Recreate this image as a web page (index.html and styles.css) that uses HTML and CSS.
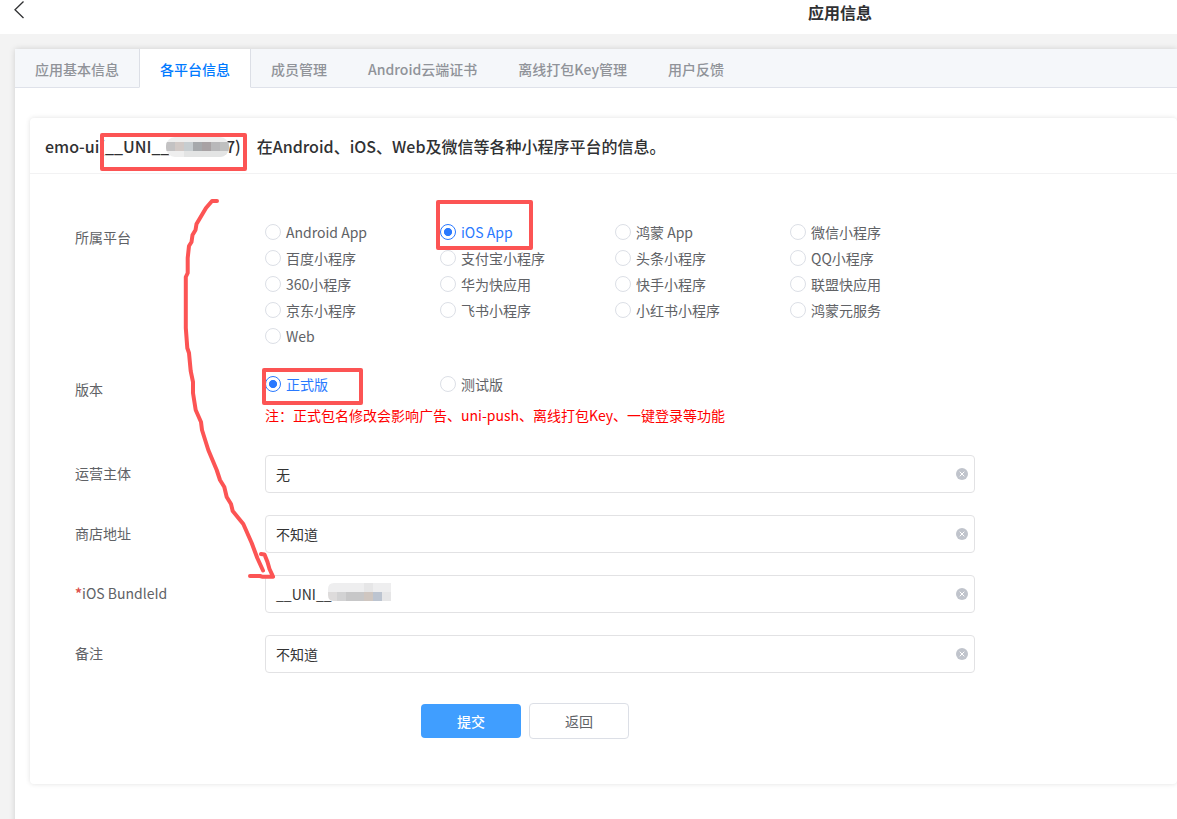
FILE: index.html
```
<!DOCTYPE html>
<html lang="zh-CN">
  <head>
    <meta charset="UTF-8" />
    <meta name="viewport" content="width=device-width, initial-scale=1.0" />
    <title>应用信息</title>
    <link rel="stylesheet" href="styles.css">
  </head>
  <body>
    <div class="header">
      <svg class="back" width="12" height="18" viewBox="0 0 12 18"><path d="M10.5 0.500 L2 8.800 L10.500 17" /></svg>
      <h1>应用信息</h1>
    </div>

    <div class="panel">
      <div class="tabs">
        <div class="tab">应用基本信息</div>
        <div class="tab active">各平台信息</div>
        <div class="tab">成员管理</div>
        <div class="tab">Android云端证书</div>
        <div class="tab">离线打包Key管理</div>
        <div class="tab">用户反馈</div>
      </div>

      <div class="card">
        <div class="card-title">
          <span>emo-ui(__UNI__</span><span class="hidden-id"></span><span>7)</span><span class="desc">在Android、iOS、Web及微信等各种小程序平台的信息。</span>
        </div>

        <form class="form">
          <div class="row platforms">
            <div class="label">所属平台</div>
            <div class="radios">
              <label class="radio"><i></i>Android App</label>
              <label class="radio checked"><i></i>iOS App</label>
              <label class="radio"><i></i>鸿蒙 App</label>
              <label class="radio"><i></i>微信小程序</label>
              <label class="radio"><i></i>百度小程序</label>
              <label class="radio"><i></i>支付宝小程序</label>
              <label class="radio"><i></i>头条小程序</label>
              <label class="radio"><i></i>QQ小程序</label>
              <label class="radio"><i></i>360小程序</label>
              <label class="radio"><i></i>华为快应用</label>
              <label class="radio"><i></i>快手小程序</label>
              <label class="radio"><i></i>联盟快应用</label>
              <label class="radio"><i></i>京东小程序</label>
              <label class="radio"><i></i>飞书小程序</label>
              <label class="radio"><i></i>小红书小程序</label>
              <label class="radio"><i></i>鸿蒙元服务</label>
              <label class="radio"><i></i>Web</label>
            </div>
          </div>

          <div class="row version">
            <div class="label">版本</div>
            <div>
              <div class="radios">
                <label class="radio checked"><i></i>正式版</label>
                <label class="radio"><i></i>测试版</label>
              </div>
              <div class="note">注：正式包名修改会影响广告、uni-push、离线打包Key、一键登录等功能</div>
            </div>
          </div>

          <div class="row field">
            <div class="label">运营主体</div>
            <div class="input"><span>无</span><svg class="clear" viewBox="0 0 12 12"><circle cx="6" cy="6" r="6" /><path d="M3.7 3.7l4.6 4.6M8.3 3.7L3.7 8.3" /></svg></div>
          </div>
          <div class="row field">
            <div class="label">商店地址</div>
            <div class="input"><span>不知道</span><svg class="clear" viewBox="0 0 12 12"><circle cx="6" cy="6" r="6" /><path d="M3.7 3.7l4.6 4.6M8.3 3.7L3.7 8.3" /></svg></div>
          </div>
          <div class="row field">
            <div class="label"><b class="required">*</b>iOS BundleId</div>
            <div class="input"><span>__UNI__</span><svg class="clear" viewBox="0 0 12 12"><circle cx="6" cy="6" r="6" /><path d="M3.7 3.7l4.6 4.6M8.3 3.7L3.7 8.3" /></svg></div>
          </div>
          <div class="row field">
            <div class="label">备注</div>
            <div class="input"><span>不知道</span><svg class="clear" viewBox="0 0 12 12"><circle cx="6" cy="6" r="6" /><path d="M3.7 3.7l4.6 4.6M8.3 3.7L3.7 8.3" /></svg></div>
          </div>

          <div class="actions">
            <button type="button" class="submit">提交</button>
            <button type="button" class="cancel">返回</button>
          </div>
        </form>
      </div>
    </div>

    <!-- red marks and masked ids, drawn over the page -->
    <svg class="marks" width="1177" height="819" viewBox="0 0 1177 819">
      <defs>
        <clipPath id="mask1"><rect x="166" y="137" width="63" height="20" rx="9" /></clipPath>
        <clipPath id="mask2"><path d="M334 583h57v18h-57q-6 0-6-6v-6q0-6 6-6z" /></clipPath>
      </defs>
      <g clip-path="url(#mask1)" shape-rendering="crispEdges">
        <rect x="166" y="137" width="63" height="20" fill="#eeeeee" />
        <rect x="184" y="151" width="45" height="6" fill="#e3e4e4" />
        <rect x="166" y="142" width="9" height="9" fill="#c3c2c3" />
        <rect x="175" y="142" width="9" height="9" fill="#d1c9c6" />
        <rect x="184" y="142" width="9" height="9" fill="#c7cdd0" />
        <rect x="193" y="142" width="9" height="9" fill="#a6a9ac" />
        <rect x="202" y="142" width="9" height="9" fill="#a8a2a4" />
        <rect x="211" y="142" width="9" height="9" fill="#b8b8ba" />
        <rect x="220" y="142" width="9" height="9" fill="#bfc0c0" />
      </g>
      <g clip-path="url(#mask2)" shape-rendering="crispEdges">
        <rect x="328" y="583" width="63" height="9" fill="#eeeeef" />
        <rect x="364" y="583" width="9" height="9" fill="#e6e6e7" />
        <rect x="328" y="592" width="9" height="9" fill="#dddbdb" />
        <rect x="337" y="592" width="9" height="9" fill="#d2d2d3" />
        <rect x="346" y="592" width="18" height="9" fill="#c7c7c8" />
        <rect x="364" y="592" width="9" height="9" fill="#cfc6c0" />
        <rect x="373" y="592" width="9" height="9" fill="#bcc4d0" />
        <rect x="382" y="592" width="9" height="9" fill="#e6e6e7" />
      </g>
      <rect x="102" y="135" width="143" height="34" />
      <rect x="438" y="202" width="93" height="46" />
      <rect x="264" y="370" width="97" height="33" />
      <path d="M217 201L212 201L206 208L196.500 224L195.500 230L192.500 235L191.500 242L189 246L187.700 258L187.700 273L185.800 277L185.800 328L187.300 348L189 353L190.700 371L193 382L193 393L195.700 410L201 422L202 430L208.300 450L216.700 470L220 480L224.300 487L226.700 497L231 504L232.700 511L243.300 524L251.700 543L257.300 558L263 570.500" />
      <path d="M261 554L264.500 554.500L267.500 562L269.500 569L273 576.700L262 576.700L260 576L250 576" />
    </svg>
  </body>
</html>
```
FILE: styles.css
```
* {
  box-sizing: border-box;
}
body {
  margin: 0;
  height: 819px;
  overflow: hidden;
  background-color: #f3f3f3;
  font-family: "Noto Sans CJK SC", sans-serif;
  font-size: 14px;
  color: #606266;
}
.header {
  display: flex;
  align-items: flex-start;
  height: 34px;
  background-color: white;
  padding-left: 13px;
}
.back {
  margin-top: 1px;
  fill: none;
  stroke: #303133;
  stroke-width: 1.3;
}
h1 {
  margin: 0;
  margin-left: 783px;
  font-size: 16px;
  line-height: 24px;
  font-weight: bold;
  color: #303133;
}
.panel {
  margin-top: 15px;
  margin-left: 15px;
  height: 800px;
  background-color: white;
  box-shadow: 0 0 6px rgba(0, 0, 0, 0.15);
}
.tabs {
  display: flex;
  height: 39px;
  background-color: #f5f7fa;
  border-bottom: 1px solid #dfe2ea;
}
.tab {
  height: 39px;
  padding: 0 20px;
  margin-left: -1px;
  border: 1px solid transparent;
  border-top: none;
  line-height: 41px;
  font-weight: 500;
  color: #909399;
  white-space: nowrap;
}
.tab.active {
  background-color: white;
  color: #007aff;
  border-left-color: #dcdfe6;
  border-right-color: #dcdfe6;
}
.card {
  margin-top: 30px;
  margin-left: 15px;
  height: 666px;
  border-radius: 4px;
  background-color: white;
  box-shadow: 0 0 5px rgba(0, 0, 0, 0.12);
}
.card-title {
  display: flex;
  height: 56px;
  padding-left: 15px;
  border-bottom: 1px solid #f2f2f3;
  font-size: 16px;
  font-weight: 500;
  line-height: 56px;
  color: #303133;
  white-space: nowrap;
}
.hidden-id {
  width: 56.5px;
}
.desc {
  margin-left: 16px;
}
.form {
  padding-top: 45px;
  padding-left: 45px;
}
.row {
  display: flex;
}
.label {
  width: 190px;
  line-height: 36px;
}
.platforms {
  height: 152px;
}
.version {
  height: 84px;
}
.radios {
  display: grid;
  grid-template-columns: repeat(4, 175px);
  grid-auto-rows: 26px;
}
.radio {
  display: flex;
  align-items: center;
  line-height: 26px;
}
.radio i {
  width: 16px;
  height: 16px;
  margin-right: 5px;
  border: 1px solid #dcdfe6;
  border-radius: 50%;
}
.checked {
  color: #2979ff;
}
.checked i {
  border-color: #2979ff;
  background: radial-gradient(circle, #2979ff 3.7px, white 4.4px);
}
.note {
  margin-top: 6px;
  line-height: 24px;
  color: red;
}
.field {
  height: 60px;
}
.required {
  color: #dd524d;
}
.input {
  display: flex;
  align-items: center;
  justify-content: space-between;
  width: 710px;
  height: 38px;
  padding: 0 6px 0 10px;
  border: 1px solid #e2e2e4;
  border-radius: 4px;
  color: #333;
}
.clear {
  width: 12px;
  height: 12px;
  margin-bottom: 1px;
  fill: #c0c4cc;
}
.clear path {
  stroke: white;
  stroke-width: 1;
}
.actions {
  display: flex;
  align-items: center;
  gap: 8px;
  height: 36px;
  margin-top: 8px;
  margin-left: 346px;
}
button {
  width: 100px;
  height: 36px;
  padding: 0;
  border: 1px solid #dcdfe6;
  border-radius: 4px;
  background-color: white;
  font-family: inherit;
  font-size: 14px;
  color: #606266;
}
.submit {
  height: 34px;
  border: none;
  background-color: #409eff;
  color: white;
  font-weight: 500;
}
.marks {
  position: absolute;
  top: 0;
  left: 0;
  pointer-events: none;
  fill: none;
  stroke-linecap: round;
  stroke-linejoin: round;
}
.marks > rect,
.marks > path {
  stroke: #fc5454;
  stroke-width: 4;
}
```
